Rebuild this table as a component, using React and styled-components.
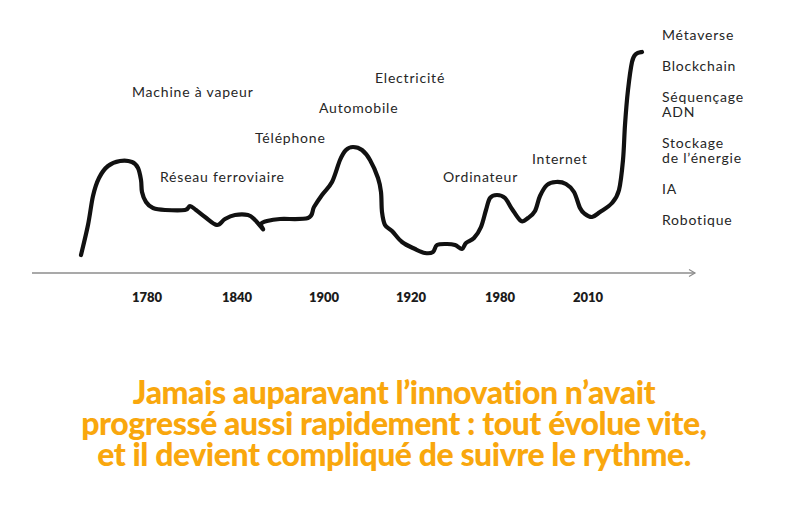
import React from "react";
import styled, { createGlobalStyle } from "styled-components";

const Global = createGlobalStyle`
  html, body { margin: 0; padding: 0; background: #ffffff; }
  body { width: 788px; height: 510px; overflow: hidden; }
`;

const Page = styled.div`
  width: 788px;
  height: 510px;
  display: flex;
  flex-direction: column;
  background: #fff;
  font-family: Lato, "Open Sans", sans-serif;
`;

const Top = styled.div`
  height: 330px;
  display: flex;
`;

const Canvas = styled.div`
  position: relative;
  width: 661px;
  height: 330px;
  flex: none;
`;

const Drawing = styled.svg`
  position: absolute;
  left: 0;
  top: 0;
  overflow: visible;
`;

const Label = styled.span`
  position: absolute;
  white-space: nowrap;
  font-size: 14px;
  line-height: 16px;
  letter-spacing: 0.8px;
  color: #262626;
`;

const Year = styled.span`
  position: absolute;
  width: 40px;
  margin-left: -20px;
  text-align: center;
  font-size: 13px;
  line-height: 16px;
  font-weight: 800;
  color: #1c1c1c;
`;

const Legend = styled.ul`
  list-style: none;
  margin: 0;
  padding: 27px 0 0 1px;
  display: flex;
  flex-direction: column;
  gap: 16px;
`;

const LegendItem = styled.li`
  font-size: 14px;
  line-height: 15px;
  letter-spacing: 0.8px;
  color: #262626;
  white-space: pre-line;
`;

const Title = styled.h1`
  margin: 46px 0 0;
  text-align: center;
  font-family: Lato, sans-serif;
  font-weight: 900;
  font-size: 32px;
  line-height: 31px;
  letter-spacing: -0.45px;
  color: #f9a70d;
`;

const curve = [
  [81, 255], [88, 225], [93, 196], [99, 178], [108, 166], [120, 161], [132, 162],
  [138, 168], [141, 180], [142, 192], [146, 202], [153, 208], [165, 210], [185, 210],
  [190, 206], [196, 210], [205, 217], [217, 225], [225, 219], [235, 215], [248, 215],
  [255, 220], [262, 228], [263, 229], [261, 224], [267, 221], [280, 219], [308, 218],
  [314, 207], [322, 195], [332, 182], [340, 160], [346, 150], [353, 147], [362, 150],
  [370, 160], [378, 178], [381, 192], [382, 212], [385, 225], [392, 231], [402, 242],
  [415, 249], [425, 253], [433, 252], [437, 245], [447, 244], [455, 245], [462, 249],
  [466, 243], [474, 238], [481, 227], [486, 210], [490, 198], [497, 195], [505, 198],
  [512, 209], [521, 221], [528, 218], [535, 211], [540, 196], [547, 185], [556, 182],
  [566, 184], [574, 192], [580, 208], [585, 214], [592, 217], [600, 212], [612, 203],
  [619, 190], [623, 160], [625, 125], [628, 90], [632, 62], [636, 54], [642, 52],
];

function smooth(pts) {
  let d = `M${pts[0][0]},${pts[0][1]}`;
  for (let i = 0; i < pts.length - 1; i++) {
    const p0 = pts[i - 1] || pts[i];
    const p1 = pts[i];
    const p2 = pts[i + 1];
    const p3 = pts[i + 2] || p2;
    const c1x = p1[0] + (p2[0] - p0[0]) / 6;
    const c1y = p1[1] + (p2[1] - p0[1]) / 6;
    const c2x = p2[0] - (p3[0] - p1[0]) / 6;
    const c2y = p2[1] - (p3[1] - p1[1]) / 6;
    d += ` C${c1x.toFixed(1)},${c1y.toFixed(1)} ${c2x.toFixed(1)},${c2y.toFixed(1)} ${p2[0]},${p2[1]}`;
  }
  return d;
}

const events = [
  { text: "Machine à vapeur", x: 132, base: 97 },
  { text: "Electricité", x: 375, base: 83 },
  { text: "Automobile", x: 319, base: 113 },
  { text: "Téléphone", x: 255, base: 143 },
  { text: "Réseau ferroviaire", x: 160, base: 182 },
  { text: "Ordinateur", x: 443, base: 182 },
  { text: "Internet", x: 532, base: 164 },
];

const years = [
  { y: "1780", x: 147 },
  { y: "1840", x: 237 },
  { y: "1900", x: 324 },
  { y: "1920", x: 411 },
  { y: "1980", x: 500 },
  { y: "2010", x: 588 },
];

const future = [
  "Métaverse",
  "Blockchain",
  "Séquençage\nADN",
  "Stockage\nde l’énergie",
  "IA",
  "Robotique",
];

export default function App() {
  const d = smooth(curve);
  return (
    <Page>
      <Global />
      <Top>
        <Canvas>
          <Drawing width="700" height="330" viewBox="0 0 700 330">
            <line x1="32" y1="273" x2="695" y2="273" stroke="#8c8c8c" strokeWidth="1.5" />
            <polyline points="689,269.5 695,273 689,276.5" fill="none" stroke="#8c8c8c" strokeWidth="1.2" />
            <path d={d} fill="none" stroke="#111" strokeWidth="4.2" strokeLinecap="round" strokeLinejoin="round" />
          </Drawing>
          {events.map((e) => (
            <Label key={e.text} style={{ left: e.x, top: e.base - 13 }}>
              {e.text}
            </Label>
          ))}
          {years.map((y) => (
            <Year key={y.y} style={{ left: y.x, top: 289 }}>
              {y.y}
            </Year>
          ))}
        </Canvas>
        <Legend>
          {future.map((f) => (
            <LegendItem key={f}>{f}</LegendItem>
          ))}
        </Legend>
      </Top>
      <Title>
        Jamais auparavant l’innovation n’avait
        <br />
        progressé aussi rapidement : tout évolue vite,
        <br />
        et il devient compliqué de suivre le rythme.
      </Title>
    </Page>
  );
}
